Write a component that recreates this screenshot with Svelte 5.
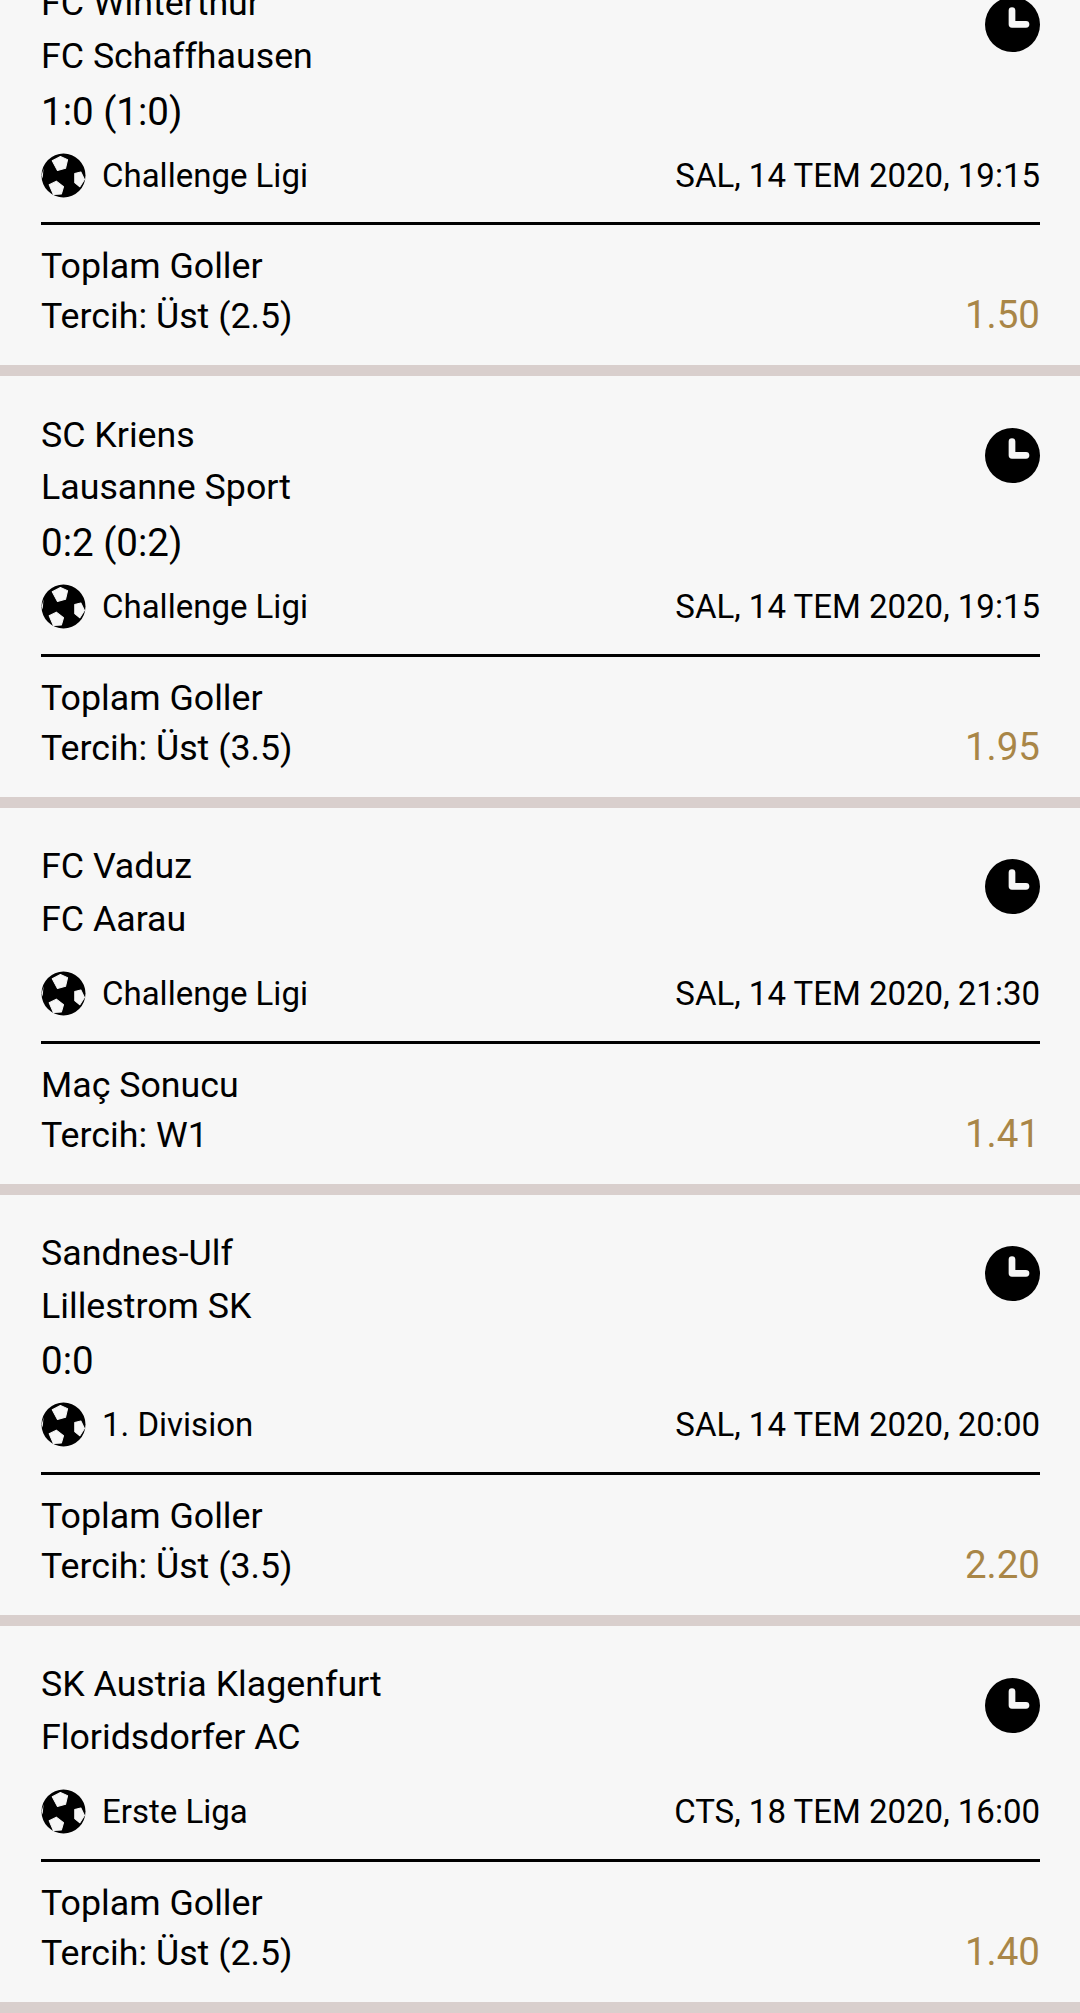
<script>
	const matches = [
		{ home: 'FC Winterthur', away: 'FC Schaffhausen', score: '1:0 (1:0)', league: 'Challenge Ligi', date: 'SAL, 14 TEM 2020, 19:15', market: 'Toplam Goller', pick: 'Tercih: Üst (2.5)', odds: '1.50' },
		{ home: 'SC Kriens', away: 'Lausanne Sport', score: '0:2 (0:2)', league: 'Challenge Ligi', date: 'SAL, 14 TEM 2020, 19:15', market: 'Toplam Goller', pick: 'Tercih: Üst (3.5)', odds: '1.95' },
		{ home: 'FC Vaduz', away: 'FC Aarau', score: '', league: 'Challenge Ligi', date: 'SAL, 14 TEM 2020, 21:30', market: 'Maç Sonucu', pick: 'Tercih: W1', odds: '1.41' },
		{ home: 'Sandnes-Ulf', away: 'Lillestrom SK', score: '0:0', league: '1. Division', date: 'SAL, 14 TEM 2020, 20:00', market: 'Toplam Goller', pick: 'Tercih: Üst (3.5)', odds: '2.20' },
		{ home: 'SK Austria Klagenfurt', away: 'Floridsdorfer AC', score: '', league: 'Erste Liga', date: 'CTS, 18 TEM 2020, 16:00', market: 'Toplam Goller', pick: 'Tercih: Üst (2.5)', odds: '1.40' }
	];
</script>

<div class="list">
	{#each matches as m}
		<section class="card">
			<div class="top">
				<div class="teams">
					<div class="team">{m.home}</div>
					<div class="team">{m.away}</div>
					{#if m.score}
						<div class="score">{m.score}</div>
					{:else}
						<div class="no-score"></div>
					{/if}
				</div>
				<svg class="clock" viewBox="0 0 55 55" width="55" height="55">
					<circle cx="27.5" cy="27.5" r="27.5" fill="#000" />
					<path d="M27 13.5 V27.3 H41" fill="none" stroke="#f7f7f7" stroke-width="6.7" stroke-linecap="round" stroke-linejoin="round" />
				</svg>
			</div>
			<div class="meta">
				<div class="league">
					<svg class="ball" viewBox="0 0 44 44" width="45" height="45">
						<circle cx="22" cy="22" r="21.5" fill="#000" />
						<g fill="#f7f7f7" stroke="#f7f7f7" stroke-width="1" stroke-linejoin="round">
							<path d="M11 7.5 L19 3.5 L26 6.5 L24 15 L16 17 Z" />
							<path d="M33 20 L39 18.5 L42.5 26 L38 33 L33 29 Z" />
							<path d="M8 31 L15 27.5 L22 33 L20 40 L12 40.5 Z" />
						</g>
						<path d="M2.5 15 L1.6 25 L0.6 22 Z" fill="#f7f7f7" />
					</svg>
					<span>{m.league}</span>
				</div>
				<span>{m.date}</span>
			</div>
			<div class="bet">
				<div>
					<div class="market">{m.market}</div>
					<div class="pick">{m.pick}</div>
				</div>
				<div class="odds">{m.odds}</div>
			</div>
		</section>
	{/each}
</div>

<style>
	:global(body) {
		background: #f7f7f7;
	}

	.list {
		height: 2013px;
		overflow: hidden;
		font-family: Roboto, sans-serif;
		color: #000;
	}

	.card {
		background: #f7f7f7;
		padding: 0 40px 0 41px;
		border-bottom: 11px solid #d9cfcd;
	}

	.card:first-child {
		margin-top: -55px;
	}

	.top {
		display: flex;
		justify-content: space-between;
		align-items: flex-start;
		padding-top: 32.25px;
	}

	.team {
		font-size: 35.75px;
		line-height: 52.75px;
	}

	.score {
		font-size: 38.5px;
		line-height: 57.5px;
	}

	.no-score {
		height: 13.25px;
	}

	.clock {
		margin-top: 19.5px;
	}

	.meta {
		display: flex;
		justify-content: space-between;
		align-items: center;
		font-size: 33px;
		height: 44px;
		margin-top: 13px;
		padding-bottom: 25px;
		border-bottom: 3px solid #000;
	}

	.league {
		display: flex;
		align-items: center;
		gap: 16px;
	}

	.ball {
		display: block;
	}

	.bet {
		display: flex;
		justify-content: space-between;
		align-items: flex-end;
		padding: 16px 0 24px;
	}

	.market,
	.pick {
		font-size: 35.75px;
		line-height: 50px;
	}

	.odds {
		font-size: 38.5px;
		line-height: 50px;
		margin-bottom: 1px;
		color: #a98647;
	}
</style>
